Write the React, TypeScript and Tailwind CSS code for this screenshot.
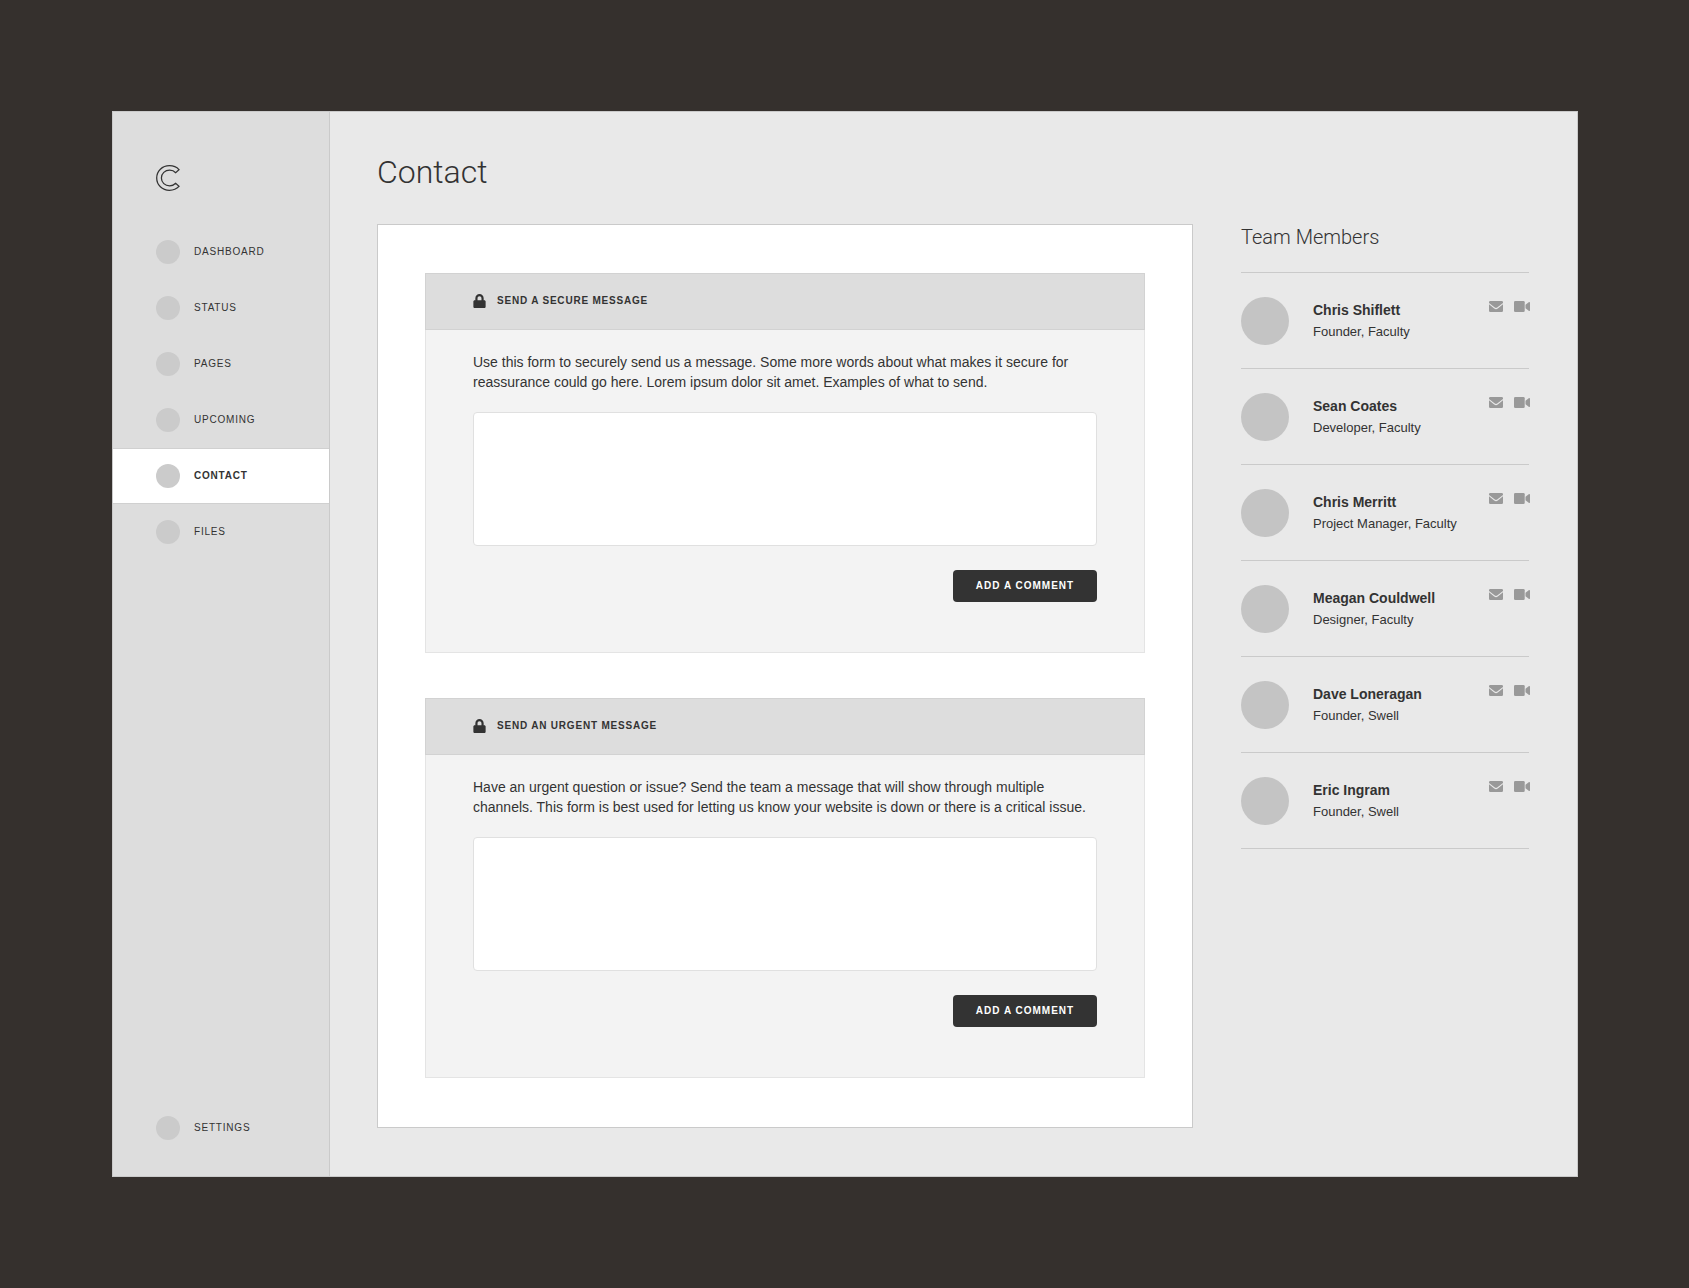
import { useState } from "react";
import type { FormEvent } from "react";
import { FaLock } from "react-icons/fa";

interface Member {
  name: string;
  role: string;
}

interface MessagePanelProps {
  id: string;
  title: string;
  description: string;
}

const navItems = ["Dashboard", "Status", "Pages", "Upcoming", "Contact", "Files"];

const members: Member[] = [
  { name: "Chris Shiflett", role: "Founder, Faculty" },
  { name: "Sean Coates", role: "Developer, Faculty" },
  { name: "Chris Merritt", role: "Project Manager, Faculty" },
  { name: "Meagan Couldwell", role: "Designer, Faculty" },
  { name: "Dave Loneragan", role: "Founder, Swell" },
  { name: "Eric Ingram", role: "Founder, Swell" },
];

const Logo = () => (
  <svg viewBox="0 0 24 26" className="h-[26px] w-6" fill="none" stroke="#333" strokeWidth="1.25">
    <path d="M23 4.6C20.6 2 17.300 0.700 13.500 0.700C6.200 0.700 0.700 6 0.700 13S6.200 25.300 13.500 25.300C17.300 25.300 20.600 24 23 21.400L19.700 18.300C18.100 20 16.100 20.800 13.700 20.800C9 20.800 5.400 17.600 5.400 13S9 5.200 13.700 5.200C16.100 5.200 18.100 6 19.700 7.700Z" />
  </svg>
);

const MailIcon = () => (
  <svg viewBox="0 0 14 11" className="h-[11px] w-[14px]" fill="#999">
    <path d="M1.300 0H12.700A1.300 1.300 0 0 1 14 1.300V2L8.200 6.600Q7 7.500 5.800 6.600L0 2V1.300A1.300 1.300 0 0 1 1.300 0Z" />
    <path d="M0 3.300L5.200 7.500Q7 8.800 8.800 7.500L14 3.300V9.700A1.300 1.300 0 0 1 12.700 11H1.300A1.300 1.300 0 0 1 0 9.700Z" />
  </svg>
);

const VideoIcon = () => (
  <svg viewBox="0 0 16 11" className="h-[11px] w-4" fill="#999">
    <rect width="10.700" height="11" rx="1.300" />
    <path d="M11.500 3.700L14.700 1.200Q16 0.500 16 1.700V9.300Q16 10.500 14.700 9.800L11.500 7.300Z" />
  </svg>
);

const NavLink = ({ label, active }: { label: string; active?: boolean }) => (
  <a
    href={`#${label.toLowerCase()}`}
    aria-current={active ? "page" : undefined}
    className={`flex h-14 items-center gap-[14px] border-y pl-[43px] text-[10px] leading-4 tracking-[0.08em] uppercase ${
      active ? "border-[#d0d0d0] bg-white font-bold" : "border-transparent"
    }`}
  >
    <span className="size-6 rounded-full bg-[#cbcbcb]" />
    <span>{label}</span>
  </a>
);

const MessagePanel = ({ id, title, description }: MessagePanelProps) => {
  const [message, setMessage] = useState<string>("");

  const handleSubmit = (event: FormEvent) => {
    event.preventDefault();
    setMessage("");
  };

  return (
    <form onSubmit={handleSubmit} className="border border-[#e4e4e4] bg-[#f3f3f3] pb-[50px]">
      <div className="-mx-px -mt-px flex h-[57px] items-center gap-[11px] border border-[#d2d2d2] bg-[#dddddd] px-[47px] pb-0.5">
        <FaLock className="h-[14px] w-[13px]" aria-hidden="true" />
        <h2 className="text-[10px] leading-4 font-bold tracking-[0.08em] uppercase">{title}</h2>
      </div>
      <div className="px-[47px] pt-[22px]">
        <label htmlFor={id} className="block text-sm leading-5">
          {description}
        </label>
        <textarea
          id={id}
          value={message}
          onChange={(e) => setMessage(e.target.value)}
          className="mt-5 block h-[134px] w-full resize-none rounded border border-[#e0e0e0] bg-white p-3 text-sm"
        />
        <button
          type="submit"
          className="mt-6 ml-auto block h-8 w-36 rounded bg-[#333] text-[10px] leading-4 font-bold tracking-widest text-white uppercase"
        >
          Add a comment
        </button>
      </div>
    </form>
  );
};

const MemberRow = ({ name, role }: Member) => (
  <li className="flex h-24 border-b border-[#cacaca] pt-6">
    <span className="size-12 rounded-full bg-[#c4c4c4]" />
    <div className="ml-6 flex-1 pt-[3px]">
      <p className="text-sm leading-5 font-bold">{name}</p>
      <p className="text-[13px] leading-[23px]">{role}</p>
    </div>
    <div className="-mr-px flex items-start gap-[11px] pt-1">
      <a href="#mail" aria-label={`Email ${name}`}>
        <MailIcon />
      </a>
      <a href="#video" aria-label={`Video call ${name}`}>
        <VideoIcon />
      </a>
    </div>
  </li>
);

export default function App() {
  return (
    <div className="min-h-screen bg-[#35302d] py-[111px] pr-[111px] pl-28 font-['Liberation_Sans',Arial,sans-serif] text-[#333]">
      <div className="flex border border-[#cacaca] bg-[#e9e9e9]">
        <nav className="flex w-[217px] shrink-0 flex-col border-r border-[#cacaca] bg-[#dddddd] pt-[53px] pb-5">
          <a href="#home" aria-label="Home" className="ml-[43px] block">
            <Logo />
          </a>
          <div className="mt-[33px]">
            {navItems.map((item) => (
              <NavLink key={item} label={item} active={item === "Contact"} />
            ))}
          </div>
          <div className="mt-auto">
            <NavLink label="Settings" />
          </div>
        </nav>
        <main className="flex-1 pt-10 pr-12 pb-12 pl-[47px]">
          <h1 className="font-['Roboto',sans-serif] text-[32px] leading-10 font-light">Contact</h1>
          <div className="mt-8 flex items-start gap-12">
            <section className="flex-1 space-y-[45px] border border-[#cacaca] bg-white px-[47px] pt-12 pb-[49px]">
              <MessagePanel
                id="secure-message"
                title="Send a secure message"
                description="Use this form to securely send us a message. Some more words about what makes it secure for reassurance could go here. Lorem ipsum dolor sit amet. Examples of what to send."
              />
              <MessagePanel
                id="urgent-message"
                title="Send an urgent message"
                description="Have an urgent question or issue? Send the team a message that will show through multiple channels. This form is best used for letting us know your website is down or there is a critical issue."
              />
            </section>
            <aside className="w-72 shrink-0">
              <h2 className="border-b border-[#cacaca] pb-[22px] font-['Roboto',sans-serif] text-xl leading-[26px] font-light">
                Team Members
              </h2>
              <ul>
                {members.map((member) => (
                  <MemberRow key={member.name} {...member} />
                ))}
              </ul>
            </aside>
          </div>
        </main>
      </div>
    </div>
  );
}
